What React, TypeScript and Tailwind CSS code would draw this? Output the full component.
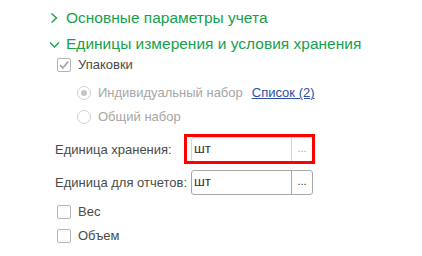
import React from "react";

const green = "text-[#16a04a]";

function Check({ checked = false }: { checked?: boolean }) {
  return (
    <div className="w-[14px] h-[14px] border border-[#b4b4b4] rounded-[2px] bg-white flex items-center justify-center">
      {checked && (
        <svg width="12" height="12" viewBox="0 0 12 12">
          <path d="M2 6.2 L4.8 9 L10.2 2.6" fill="none" stroke="#a8a8a8" strokeWidth="1.8" />
        </svg>
      )}
    </div>
  );
}

function Radio({ on = false }: { on?: boolean }) {
  return (
    <div className="w-[14px] h-[14px] rounded-full border border-[#cfcfcf] bg-white flex items-center justify-center">
      {on && <div className="w-[6px] h-[6px] rounded-full bg-[#c4c4c4]" />}
    </div>
  );
}

function Field({ light = false }: { light?: boolean }) {
  return (
    <div
      className={`w-[122px] h-[25px] flex rounded-[3px] border bg-white ${
        light ? "border-[#d4d4d4]" : "border-[#a8a8a8]"
      }`}
    >
      <div className="flex-1 flex items-center pl-[2px] text-[13.5px] text-[#333]">шт</div>
      <div
        className={`w-[21px] flex items-center justify-center border-l text-[11px] leading-none pb-[3px] ${
          light ? "border-[#d4d4d4] text-[#a0a0a0]" : "border-[#a8a8a8] text-[#333]"
        }`}
      >
        ...
      </div>
    </div>
  );
}

export default function App() {
  return (
    <div
      className="w-[422px] h-[256px] bg-white overflow-hidden flex flex-col"
      style={{ fontFamily: '"Liberation Sans", Arial, sans-serif' }}
    >
      <div className="mt-[6px] h-[24px] flex items-center pl-[50px]">
        <svg width="9" height="12" viewBox="0 0 9 12" className="mr-[7px]">
          <path d="M1.5 1.5 L6.5 6 L1.5 10.5" fill="none" stroke="#16a04a" strokeWidth="1.4" />
        </svg>
        <span className={`text-[15.5px] ${green}`}>Основные параметры учета</span>
      </div>
      <div className="mt-[3px] h-[22px] flex items-center pl-[49px]">
        <svg width="11" height="8" viewBox="0 0 11 8" className="mr-[6px] mt-[2px]">
          <path d="M1 1.5 L5.5 6 L10 1.5" fill="none" stroke="#16a04a" strokeWidth="1.4" />
        </svg>
        <span className={`text-[15.5px] ${green}`}>Единицы измерения и условия хранения</span>
      </div>
      <div className="h-[20px] flex items-center pl-[57px] gap-[7px]">
        <Check checked />
        <span className="text-[13px] text-[#4a4a4a]">Упаковки</span>
      </div>
      <div className="mt-[8px] h-[20px] flex items-center pl-[77px]">
        <Radio on />
        <span className="ml-[7px] text-[13px] text-[#a6a6a6]">Индивидуальный набор</span>
        <span className="ml-[9px] text-[13px] text-[#2a50a6] underline">Список (2)</span>
      </div>
      <div className="mt-[4px] h-[20px] flex items-center pl-[77px]">
        <Radio />
        <span className="ml-[7px] text-[13px] text-[#a6a6a6]">Общий набор</span>
      </div>
      <div className="mt-[10px] h-[25px] flex items-center pl-[55px]">
        <span className="w-[136px] text-[13px] text-[#4a4a4a]">Единица хранения:</span>
        <div className="relative">
          <Field light />
          <div className="absolute left-[-7px] top-[-3px] right-[-2px] bottom-[-2px] border-[3px] border-[#ff0000] pointer-events-none" />
        </div>
      </div>
      <div className="mt-[8px] h-[25px] flex items-center pl-[55px]">
        <span className="w-[136px] text-[13px] text-[#4a4a4a]">Единица для отчетов:</span>
        <Field />
      </div>
      <div className="mt-[7px] h-[20px] flex items-center pl-[57px] gap-[7px]">
        <Check />
        <span className="text-[13px] text-[#4a4a4a]">Вес</span>
      </div>
      <div className="mt-[4px] h-[20px] flex items-center pl-[57px] gap-[7px]">
        <Check />
        <span className="text-[13px] text-[#4a4a4a]">Объем</span>
      </div>
    </div>
  );
}
